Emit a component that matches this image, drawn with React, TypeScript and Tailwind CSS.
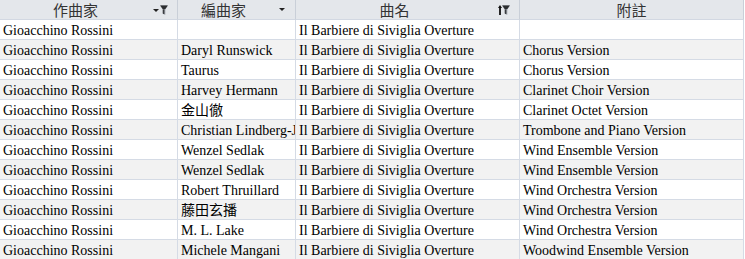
const rows: [string, string, string, string][] = [
  ["Gioacchino Rossini", "", "Il Barbiere di Siviglia Overture", ""],
  ["Gioacchino Rossini", "Daryl Runswick", "Il Barbiere di Siviglia Overture", "Chorus Version"],
  ["Gioacchino Rossini", "Taurus", "Il Barbiere di Siviglia Overture", "Chorus Version"],
  ["Gioacchino Rossini", "Harvey Hermann", "Il Barbiere di Siviglia Overture", "Clarinet Choir Version"],
  ["Gioacchino Rossini", "金山徹", "Il Barbiere di Siviglia Overture", "Clarinet Octet Version"],
  ["Gioacchino Rossini", "Christian Lindberg-Jan Sandström", "Il Barbiere di Siviglia Overture", "Trombone and Piano Version"],
  ["Gioacchino Rossini", "Wenzel Sedlak", "Il Barbiere di Siviglia Overture", "Wind Ensemble Version"],
  ["Gioacchino Rossini", "Wenzel Sedlak", "Il Barbiere di Siviglia Overture", "Wind Ensemble Version"],
  ["Gioacchino Rossini", "Robert Thruillard", "Il Barbiere di Siviglia Overture", "Wind Orchestra Version"],
  ["Gioacchino Rossini", "藤田玄播", "Il Barbiere di Siviglia Overture", "Wind Orchestra Version"],
  ["Gioacchino Rossini", "M. L. Lake", "Il Barbiere di Siviglia Overture", "Wind Orchestra Version"],
  ["Gioacchino Rossini", "Michele Mangani", "Il Barbiere di Siviglia Overture", "Woodwind Ensemble Version"],
]

function Funnel() {
  return (
    <svg width="8" height="10" viewBox="0 0 8 10" aria-hidden>
      <path d="M0 0.5 H8 L5.2 4.5 V9.8 L2.8 8.6 V4.5 Z" fill="#7a7e84" />
      <path d="M0.3 0.5 H7.7 L5.2 4 H2.8 Z" fill="#2b2d30" />
      <path d="M2.8 4.5 H4 V9.2 L2.8 8.6 Z" fill="#3a3c40" />
    </svg>
  )
}

function DropArrow() {
  return (
    <svg width="6" height="4" viewBox="0 0 6 4" aria-hidden>
      <path d="M0 0 H6 L3 3 Z" fill="#222" />
    </svg>
  )
}

function UpArrow() {
  return (
    <svg width="4" height="10" viewBox="0 0 4 10" aria-hidden>
      <path d="M2 0 L4 3 H2.9 V10 H1.1 V3 H0 Z" fill="#111" />
    </svg>
  )
}

function HeaderCell({ label, icon }: { label: string; icon?: React.ReactNode }) {
  return (
    <div className="flex h-[20px] items-center border-b border-r border-b-[#d2d8e2] border-r-[#c9cfd8]">
      <span className="flex-1 pt-[3px] text-center text-[15px] leading-none text-[#333]">{label}</span>
      {icon && <span className="flex w-[26px] shrink-0 items-center justify-end pr-[9px]">{icon}</span>}
    </div>
  )
}

export default function App() {
  return (
    <div
      className="w-[745px] h-[259px] overflow-hidden bg-white"
      style={{ fontFamily: '"Liberation Serif", "Noto Sans CJK TC", serif' }}
    >
      <div className="grid w-[744px] grid-cols-[178px_118px_224px_224px] bg-[#e4e7eb]">
        <HeaderCell
          label="作曲家"
          icon={
            <span className="flex items-end gap-px">
              <span className="mb-[2px] flex"><DropArrow /></span>
              <Funnel />
            </span>
          }
        />
        <HeaderCell label="編曲家" icon={<span className="mr-px flex"><DropArrow /></span>} />
        <HeaderCell
          label="曲名"
          icon={
            <span className="flex items-center">
              <UpArrow />
              <Funnel />
            </span>
          }
        />
        <HeaderCell label="附註" />
      </div>
      {rows.map((r, i) => (
        <div
          key={i}
          className={`grid w-[744px] grid-cols-[178px_118px_224px_224px] ${i % 2 === 1 ? "bg-[#f2f2f2]" : "bg-white"}`}
        >
          {r.map((c, j) => (
            <div
              key={j}
              className="h-[20px] overflow-hidden whitespace-nowrap border-b border-r border-[#d5dbe5] pl-[3px] pt-[2px] text-[14px] leading-[17px] text-black"
            >
              {c}
            </div>
          ))}
        </div>
      ))}
    </div>
  )
}
